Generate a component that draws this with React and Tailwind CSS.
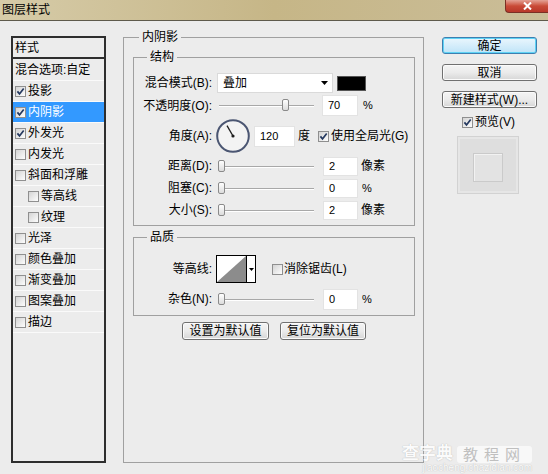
import React from 'react';

const layers = [
  { label: '投影', checked: true },
  { label: '内阴影', checked: true, active: true },
  { label: '外发光', checked: true },
  { label: '内发光' },
  { label: '斜面和浮雕' },
  { label: '等高线', indent: true },
  { label: '纹理', indent: true },
  { label: '光泽' },
  { label: '颜色叠加' },
  { label: '渐变叠加' },
  { label: '图案叠加' },
  { label: '描边' },
];

const CheckBox = ({ checked, className = '' }) => (
  <span
    className={`inline-flex w-[11px] h-[11px] shrink-0 items-center justify-center border border-[#8f8f8f] bg-linear-to-br from-[#d4d4d4] to-[#fdfdfd] ${className}`}
  >
    {checked && (
      <svg width="9" height="9" viewBox="0 0 9 9">
        <path d="M1.4 4.4 L3.5 6.9 L7.7 1.5" fill="none" stroke="#24385f" strokeWidth="1.7" />
      </svg>
    )}
  </span>
);

const Slider = ({ className, thumb }) => (
  <div className={`relative h-[13px] shrink-0 ${className}`}>
    <div className="absolute left-0 right-0 top-[6px] h-[2px] border-t border-[#a8a8a8] border-b border-b-white" />
    <div
      className={`absolute top-0 w-[7px] h-[12px] rounded-[2px] border border-[#8a8a8a] bg-linear-to-b from-white to-[#dcdcdc] ${thumb}`}
    />
  </div>
);

const NumBox = ({ value, className }) => (
  <div
    className={`flex shrink-0 items-center bg-white border border-[#e3e3e3] pl-[5px] text-[11px] leading-none ${className}`}
  >
    {value}
  </div>
);

const Row = ({ label, h, children }) => (
  <div className={`flex items-center ${h}`}>
    <span className="w-[78px] shrink-0 text-right leading-[14px]">{label}</span>
    {children}
  </div>
);

const Btn = ({ children, className = '', primary }) => (
  <div
    className={`flex items-center justify-center rounded-[3px] border leading-none ${
      primary
        ? 'border-[#3c7fb1] bg-linear-to-b from-[#eaf6fd] to-[#bfe4f8] shadow-[inset_0_0_0_1px_#5fd3f5]'
        : 'border-[#707070] bg-linear-to-b from-[#f4f4f4] via-[#ebebeb] to-[#d6d6d6] shadow-[inset_0_0_0_1px_#fbfbfb]'
    } ${className}`}
  >
    {children}
  </div>
);

const Dial = () => (
  <svg width="34" height="34" viewBox="0 0 34 34" className="shrink-0">
    <circle cx="17" cy="17" r="15.8" fill="#f3f3f3" stroke="#4b5672" strokeWidth="2" />
    <line x1="17" y1="17" x2="11" y2="6.6" stroke="#1d1d1d" strokeWidth="1.3" />
    <circle cx="17" cy="17" r="1.6" fill="#1d1d1d" />
  </svg>
);

const Contour = () => (
  <div className="flex w-[40px] h-[28px] shrink-0 border border-black bg-white">
    <svg width="29" height="26" viewBox="0 0 29 26">
      <polygon points="0,26 29,0 29,26" fill="#8c8c8c" />
    </svg>
    <div className="flex flex-1 items-center justify-center border-l border-black">
      <svg width="5" height="3" viewBox="0 0 5 3">
        <polygon points="0,0 5,0 2.5,3" fill="#000" />
      </svg>
    </div>
  </div>
);

export default function App() {
  return (
    <div className="relative w-[548px] h-[474px] overflow-hidden bg-[#ececec] text-[12px] text-black font-['Liberation_Sans','Noto_Sans_CJK_SC',sans-serif]">
      {/* title bar */}
      <div className="flex h-[21px] items-start justify-between border-b border-[#5e5a4c] bg-linear-to-r from-[#d6cba8] via-[#c6b687] to-[#cabd98]">
        <span className="pl-[2px] pt-[3px] leading-[14px]">图层样式</span>
        <div className="flex w-[43px] h-[13px] items-center justify-center rounded-bl-[4px] border-l border-b border-[#7a2f25] bg-linear-to-b from-[#e3a195] via-[#c94a37] to-[#b8372a]">
          <svg width="9" height="8" viewBox="0 0 9 8">
            <path d="M1 0.5 L8 7.5 M8 0.5 L1 7.5" stroke="#fff" strokeWidth="2" />
          </svg>
        </div>
      </div>

      <div className="flex items-start pl-[11px]">
        {/* left list */}
        <div className="mt-[15px] w-[95px] h-[427px] shrink-0 border-2 border-[#2e2e2e]">
          <div className="flex h-[21px] items-center border-b-2 border-[#2e2e2e] pl-[2px]">样式</div>
          <div className="flex h-[22px] items-center border-b border-[#fafafa] pl-[2px]">混合选项:自定</div>
          {layers.map((l) => (
            <div
              key={l.label}
              className={`flex h-[21px] items-center border-b border-[#fafafa] ${
                l.indent ? 'pl-[15px]' : 'pl-[2px]'
              } ${l.active ? 'bg-[#3399ff] text-white' : ''}`}
            >
              <CheckBox checked={l.checked} />
              <span className="ml-[2px]">{l.label}</span>
            </div>
          ))}
        </div>

        {/* main panel */}
        <fieldset className="ml-[17px] mt-[9px] w-[301px] h-[433px] shrink-0 border border-[#a0a0a0]">
          <legend className="ml-[15px] px-[3px] leading-[14px]">内阴影</legend>
          <div className="pl-[9px] pr-[8px]">
            <fieldset className="mt-[6px] border border-[#a0a0a0] pb-[4px]">
              <legend className="ml-[13px] px-[3px] leading-[14px]">结构</legend>
              <div className="pt-[8px]">
                <Row label="混合模式(B):" h="h-[22px]">
                  <div className="ml-[5px] flex w-[116px] h-[20px] items-center justify-between border border-[#dadada] bg-white pl-[5px] pr-[4px]">
                    <span className="leading-none">叠加</span>
                    <svg width="7" height="4" viewBox="0 0 7 4">
                      <polygon points="0,0 7,0 3.5,4" fill="#000" />
                    </svg>
                  </div>
                  <div className="ml-[4px] w-[29px] h-[15px] border border-[#555] bg-black" />
                </Row>
                <Row label="不透明度(O):" h="h-[23px]">
                  <Slider className="ml-[7px] w-[95px]" thumb="left-[63px]" />
                  <NumBox value="70" className="ml-[8px] w-[36px] h-[21px]" />
                  <span className="ml-[5px] text-[11px]">%</span>
                </Row>
                <Row label="角度(A):" h="h-[38px]">
                  <div className="ml-[4px]">
                    <Dial />
                  </div>
                  <NumBox value="120" className="ml-[4px] w-[41px] h-[21px]" />
                  <span className="ml-[3px]">度</span>
                  <CheckBox checked className="ml-[8px]" />
                  <span className="ml-[2px]">使用全局光(G)</span>
                </Row>
                <Row label="距离(D):" h="h-[22px]">
                  <Slider className="ml-[6px] w-[96px]" thumb="left-0" />
                  <NumBox value="2" className="ml-[9px] w-[35px] h-[19px]" />
                  <span className="ml-[3px]">像素</span>
                </Row>
                <Row label="阻塞(C):" h="h-[22px]">
                  <Slider className="ml-[6px] w-[96px]" thumb="left-0" />
                  <NumBox value="0" className="ml-[9px] w-[35px] h-[19px]" />
                  <span className="ml-[4px] text-[11px]">%</span>
                </Row>
                <Row label="大小(S):" h="h-[22px]">
                  <Slider className="ml-[6px] w-[96px]" thumb="left-0" />
                  <NumBox value="2" className="ml-[9px] w-[35px] h-[19px]" />
                  <span className="ml-[3px]">像素</span>
                </Row>
              </div>
            </fieldset>

            <fieldset className="mt-[4px] border border-[#a0a0a0] pb-[3px]">
              <legend className="ml-[13px] px-[3px] leading-[14px]">品质</legend>
              <div className="pt-[8px]">
                <Row label="等高线:" h="h-[34px]">
                  <div className="ml-[4px]">
                    <Contour />
                  </div>
                  <CheckBox className="ml-[16px]" />
                  <span className="ml-[1px]">消除锯齿(L)</span>
                </Row>
                <Row label="杂色(N):" h="h-[26px]">
                  <Slider className="ml-[6px] w-[96px]" thumb="left-0" />
                  <NumBox value="0" className="ml-[9px] w-[35px] h-[21px]" />
                  <span className="ml-[4px] text-[11px]">%</span>
                </Row>
              </div>
            </fieldset>

            <div className="mt-[6px] flex justify-center gap-[11px]">
              <Btn className="w-[87px] h-[18px]">设置为默认值</Btn>
              <Btn className="w-[86px] h-[18px]">复位为默认值</Btn>
            </div>
          </div>
        </fieldset>

        {/* right column */}
        <div className="ml-[18px] mt-[16px] w-[95px] shrink-0">
          <Btn primary className="h-[17px]">确定</Btn>
          <Btn className="mt-[10px] h-[17px]">取消</Btn>
          <Btn className="mt-[10px] h-[17px]">新建样式(W)...</Btn>
          <div className="mt-[7px] flex h-[14px] items-center pl-[20px]">
            <CheckBox checked />
            <span className="ml-[2px] leading-none">预览(V)</span>
          </div>
          <div className="ml-[15px] mt-[7px] w-[62px] h-[58px] border border-[#d2d2d2] bg-[#dedede] pl-[15px] pt-[16px] shadow-[inset_0_0_0_2px_#e6e6e6]">
            <div className="w-[30px] h-[29px] border border-[#cacaca] bg-[#e3e3e3] shadow-[inset_1px_1px_0_#f2f2f2]" />
          </div>
        </div>
      </div>

      {/* watermark */}
      <div className="absolute right-[16px] bottom-[1px] flex flex-col items-end opacity-80">
        <div className="flex items-center gap-[4px]">
          <span className="text-[17px] font-bold leading-[18px] text-white [text-shadow:0_0_1px_#9a9a9a]">查字典</span>
          <span className="rounded-[3px] bg-white/80 px-[6px] text-[15px] leading-[17px] tracking-[6px] text-[#b5b5b5]">教程网</span>
        </div>
        <span className="text-[10px] leading-[10px] text-white [text-shadow:0_0_1px_#9a9a9a]">jiaocheng.chazidian.com</span>
      </div>
    </div>
  );
}
